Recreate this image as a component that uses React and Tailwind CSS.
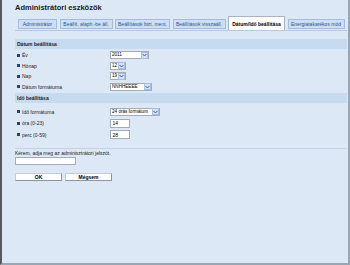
import React from 'react';

const tabs = [
  { label: 'Administrátor', w: 'w-[39px]' },
  { label: 'Beállít. alaph.-be áll.', w: 'w-[53px]' },
  { label: 'Beállítások bizt. ment.', w: 'w-[55px]' },
  { label: 'Beállítások visszaáll.', w: 'w-[53px]' },
  { label: 'Dátum/Idő beállítása', w: 'w-[57px]', active: true },
  { label: 'Energiatakarékos mód', w: 'w-[57px]' },
];

const Arrow = () => (
  <span className="flex shrink-0 items-center justify-center w-[7px] h-[7px] bg-[#d3e2f5] border border-[#a9bfdc]">
    <svg width="5" height="4" viewBox="0 0 5 4">
      <path d="M0.6 1 L2.5 3 L4.4 1" fill="none" stroke="#3b5fae" strokeWidth="1" />
    </svg>
  </span>
);

const Select = ({ value, w }) => (
  <div className={`flex items-center justify-between h-[8px] ${w} bg-white border border-[#a4acb6] pl-[1px]`}>
    <span className="flex-1 min-w-0 overflow-hidden whitespace-nowrap text-[4.6px] leading-[6px] text-black">{value}</span>
    <Arrow />
  </div>
);

const Input = ({ value, w = 'w-[20px]' }) => (
  <div className={`flex items-center h-[9px] ${w} bg-white border border-[#a4acb6] pl-[1.5px]`}>
    <span className="text-[5px] leading-[6px] text-black">{value}</span>
  </div>
);

const Row = ({ label, children, h }) => (
  <div className={`flex items-center ${h} pl-[2px]`}>
    <div className="flex items-center w-[91px]">
      <span className="w-[3px] h-[3px] bg-[#1d3f95] mr-[2px]" />
      <span className="text-[5px] leading-[6px] text-[#222]">{label}</span>
    </div>
    <span className="text-[4px] leading-[5px] text-[#8a96a4] w-[2px]">:</span>
    {children}
  </div>
);

const SectionBar = ({ title }) => (
  <div className="flex items-center h-[10px] bg-[#c6daf0] pl-[2px]">
    <span className="text-[5px] leading-[6px] font-bold text-[#222]">{title}</span>
  </div>
);

export default function App() {
  return (
    <div className="w-[350px] h-[265px] bg-[#dce8f5] border-l-2 border-l-[#56595d] border-r-2 border-r-[#9aa6b3] border-b-2 border-b-[#9aa6b3] font-['Liberation_Sans',Arial,sans-serif] overflow-hidden">
      <div className="pl-[13px] pr-[1px] pt-[4px]">
        <h1 className="text-[7.5px] leading-[8px] font-bold text-[#1a1a1a]">Administrátori eszközök</h1>

        <div className="flex items-end gap-[2.5px] pl-[3px] mt-[5px] h-[14px] border-b border-[#b7c9df]">
          {tabs.map((t) =>
            t.active ? (
              <div
                key={t.label}
                className={`${t.w} h-[14px] flex items-center justify-center bg-white border border-[#a9b4c2] border-b-0`}
              >
                <span className="text-[5px] leading-[6px] font-bold text-black whitespace-nowrap">{t.label}</span>
              </div>
            ) : (
              <div
                key={t.label}
                className={`${t.w} h-[10px] mb-[1px] flex items-center justify-center bg-[#cddff4] border border-[#a6bcdc]`}
              >
                <span className="text-[5px] leading-[6px] text-[#2c4fa2] whitespace-nowrap">{t.label}</span>
              </div>
            )
          )}
        </div>

        <div className="mt-[8px]">
          <SectionBar title="Dátum beállítása" />
          <div className="pt-[1px]">
            <Row label="Év" h="h-[10.5px]">
              <Select value="2011" w="w-[39px]" />
            </Row>
            <Row label="Hónap" h="h-[10.5px]">
              <Select value="12" w="w-[16px]" />
            </Row>
            <Row label="Nap" h="h-[10.5px]">
              <Select value="19" w="w-[16px]" />
            </Row>
            <Row label="Dátum formátuma" h="h-[10.5px]">
              <Select value="NNHHÉÉÉÉ" w="w-[42px]" />
            </Row>
          </div>
        </div>

        <div className="mt-[1px]">
          <SectionBar title="Idő beállítása" />
          <div className="pt-[3px]">
            <Row label="Idő formátuma" h="h-[11.5px]">
              <Select value="24 órás formátum" w="w-[50px]" />
            </Row>
            <Row label="óra (0-23)" h="h-[11.5px]">
              <Input value="14" />
            </Row>
            <Row label="perc (0-59)" h="h-[11.5px]">
              <Input value="28" />
            </Row>
          </div>
        </div>

        <div className="mt-[7px] border-t border-[#c3d3e6] pt-[1px]">
          <p className="text-[5px] leading-[6px] text-[#222]">Kérem, adja meg az adminisztrátori jelszót.</p>
          <div className="mt-[1px] h-[8px] w-[61px] bg-white border border-[#a4acb6]" />
          <div className="flex gap-[3px] mt-[8px]">
            <button className="w-[47px] h-[8px] flex items-center justify-center bg-white border border-[#c8ccd2] border-r-[#8e959e] border-b-[#8e959e]">
              <span className="text-[5px] leading-[6px] font-bold text-black">OK</span>
            </button>
            <button className="w-[47px] h-[8px] flex items-center justify-center bg-white border border-[#c8ccd2] border-r-[#8e959e] border-b-[#8e959e]">
              <span className="text-[5px] leading-[6px] font-bold text-black">Mégsem</span>
            </button>
          </div>
        </div>
      </div>
    </div>
  );
}
